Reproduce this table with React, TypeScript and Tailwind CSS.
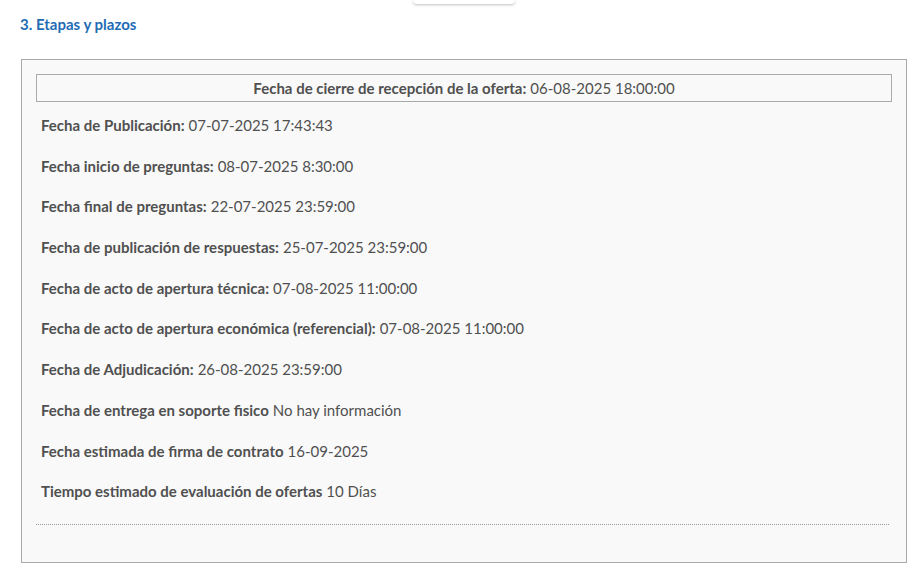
const rows: [string, string][] = [
  ['Fecha de Publicación:', '07-07-2025 17:43:43'],
  ['Fecha inicio de preguntas:', '08-07-2025 8:30:00'],
  ['Fecha final de preguntas:', '22-07-2025 23:59:00'],
  ['Fecha de publicación de respuestas:', '25-07-2025 23:59:00'],
  ['Fecha de acto de apertura técnica:', '07-08-2025 11:00:00'],
  ['Fecha de acto de apertura económica (referencial):', '07-08-2025 11:00:00'],
  ['Fecha de Adjudicación:', '26-08-2025 23:59:00'],
  ['Fecha de entrega en soporte fisico', 'No hay información'],
  ['Fecha estimada de firma de contrato', '16-09-2025'],
  ['Tiempo estimado de evaluación de ofertas', '10 Días'],
]

export default function App() {
  return (
    <div className="w-[921px] h-[578px] bg-white overflow-hidden font-['Lato',sans-serif] text-[#505050]">
      <div className="ml-[413px] w-[102px] h-[4px] bg-white rounded-b-lg shadow-[0_1px_3px_rgba(0,0,0,0.25)]" />

      <h2 className="ml-[20px] mt-[12px] text-[15px] font-bold leading-4 text-[#1f6cb5]">
        3. Etapas y plazos
      </h2>

      <section className="ml-[21px] mt-[27px] w-[886px] h-[504px] border border-[#aaa] bg-[#f9f9f9] px-[14px] pt-[14px]">
        <div className="h-[28px] border border-[#aaa] flex items-center justify-center text-[15px]">
          <span className="font-bold">Fecha de cierre de recepción de la oferta:</span>
          <span className="ml-1">06-08-2025 18:00:00</span>
        </div>

        <div className="flex flex-col pl-[5px] pt-[14px]">
          {rows.map(([label, value]) => (
            <div key={label} className="h-[40.7px] text-[15px] leading-[18px]">
              <span className="font-bold">{label}</span>
              <span className="ml-1">{value}</span>
            </div>
          ))}
        </div>

        <div className="mt-[1px] mr-[3px] border-t border-dotted border-[#999]" />
      </section>
    </div>
  )
}
